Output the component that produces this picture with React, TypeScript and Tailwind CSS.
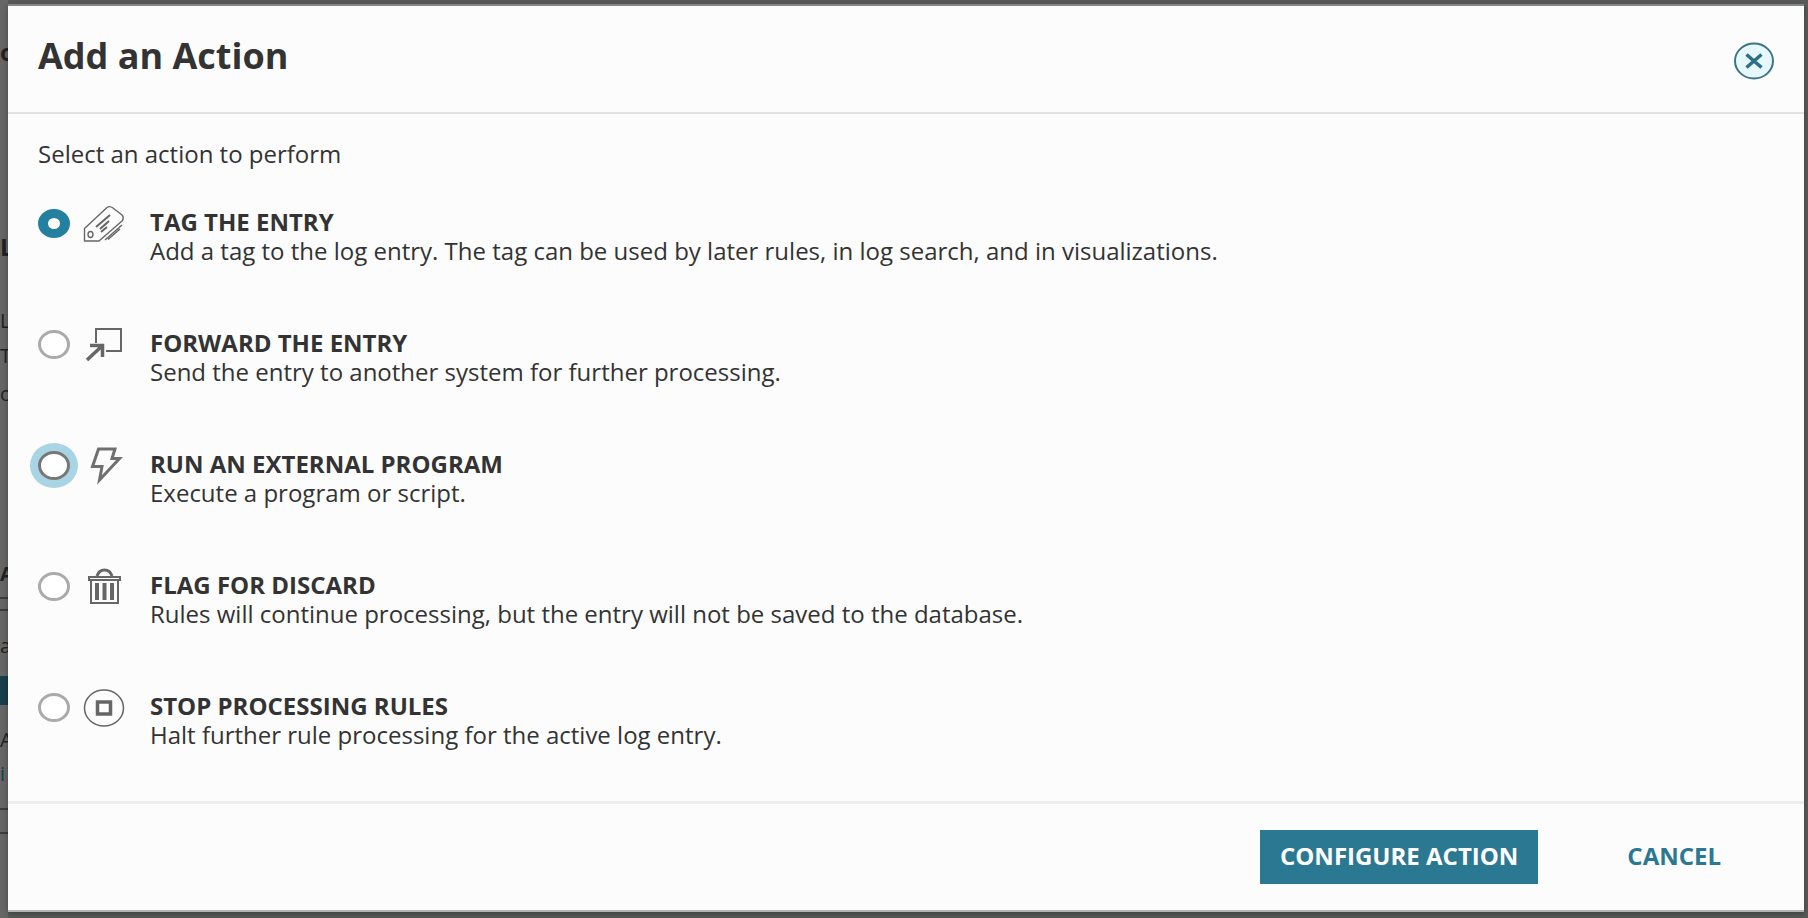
import React, { useState } from "react";

type Action = {
  id: string;
  title: string;
  description: string;
  icon: React.ReactNode;
};

const ACTIONS: Action[] = [
  {
    id: "tag",
    title: "TAG THE ENTRY",
    description:
      "Add a tag to the log entry. The tag can be used by later rules, in log search, and in visualizations.",
    icon: <TagIcon />,
  },
  {
    id: "forward",
    title: "FORWARD THE ENTRY",
    description: "Send the entry to another system for further processing.",
    icon: <ForwardIcon />,
  },
  {
    id: "run",
    title: "RUN AN EXTERNAL PROGRAM",
    description: "Execute a program or script.",
    icon: <BoltIcon />,
  },
  {
    id: "discard",
    title: "FLAG FOR DISCARD",
    description: "Rules will continue processing, but the entry will not be saved to the database.",
    icon: <TrashIcon />,
  },
  {
    id: "stop",
    title: "STOP PROCESSING RULES",
    description: "Halt further rule processing for the active log entry.",
    icon: <StopIcon />,
  },
];

export default function App() {
  const [selected, setSelected] = useState("tag");

  return (
    <div className="relative min-h-screen bg-[#585b5a] font-['Open_Sans','Noto_Sans',sans-serif] text-[#333]">
      <PageEdge />

      <div className="relative flex min-h-screen pt-1 pr-1 pb-[6px] pl-2">
        <form
          role="dialog"
          aria-modal="true"
          aria-labelledby="dialog-title"
          onSubmit={(e) => e.preventDefault()}
          className="flex grow flex-col border-t-2 border-b-2 border-t-[#858585] border-b-[#b5b5b5] bg-[#fcfcfc] shadow-[0_2px_6px_rgba(0,0,0,0.3)]"
        >
          <header className="flex h-[108px] items-start justify-between border-b-2 border-[#e2e2e2] pt-[30px] pr-[29px] pl-[30px]">
            <h1 id="dialog-title" className="text-[36px] leading-10 font-bold">
              Add an Action
            </h1>
            <button type="button" aria-label="Close" className="pt-[6px]">
              <CloseIcon />
            </button>
          </header>

          <fieldset aria-labelledby="action-prompt" className="grow px-[30px] pt-[25px]">
            <p id="action-prompt" className="text-2xl leading-[30px]">
              Select an action to perform
            </p>

            <div className="mt-[38px] flex flex-col gap-[63px]">
              {ACTIONS.map((action) => (
                <ActionRow
                  key={action.id}
                  action={action}
                  checked={selected === action.id}
                  highlighted={action.id === "run"}
                  onSelect={() => setSelected(action.id)}
                />
              ))}
            </div>
          </fieldset>

          <footer className="flex items-center justify-end gap-[73px] border-t-[3px] border-[#ededed] py-[26px] pr-[67px]">
            <button
              type="submit"
              className="h-[54px] bg-[#2a7891] px-5 pb-[3px] text-2xl leading-[30px] font-bold text-white"
            >
              CONFIGURE ACTION
            </button>
            <button type="button" className="h-[54px] px-4 pb-[3px] text-2xl leading-[30px] font-bold text-[#2a7891]">
              CANCEL
            </button>
          </footer>
        </form>
      </div>
    </div>
  );
}

type ActionRowProps = {
  action: Action;
  checked: boolean;
  highlighted: boolean;
  onSelect: () => void;
};

function ActionRow({ action, checked, highlighted, onSelect }: ActionRowProps) {
  return (
    <label className="flex items-start">
      <input
        type="radio"
        name="action"
        value={action.id}
        checked={checked}
        onChange={onSelect}
        className={`mt-[2px] h-[29px] w-8 shrink-0 appearance-none rounded-[50%] bg-white checked:border-x-[10px] checked:border-y-[9px] checked:border-[#23819f] ${
          highlighted ? "border-[3px] border-[#777] ring-[8px] ring-[#a8d4e4]" : "border-[3px] border-[#aaa]"
        }`}
      />
      <span className="-mt-[2px] ml-[13px] w-[67px] shrink-0">{action.icon}</span>
      <span className="text-2xl">
        <span className="block leading-[29px] font-bold">{action.title}</span>
        <span className="block leading-[29px]">{action.description}</span>
      </span>
    </label>
  );
}

// Sliver of the dimmed page that stays visible left of the dialog
function PageEdge() {
  return (
    <div
      aria-hidden="true"
      className="absolute inset-y-0 left-0 flex w-2 flex-col overflow-hidden bg-[#666] text-xl leading-6 text-[#222]"
    >
      <span className="mt-9 text-2xl font-bold">o</span>
      <span className="mt-[163px] text-2xl font-bold">L</span>
      <span className="mt-[46px]">L</span>
      <span className="mt-[11px]">T</span>
      <span className="mt-[14px]">o</span>
      <span className="mt-[156px] font-bold">A</span>
      <span className="mt-[11px] h-[14px] border-y-2 border-[#3c3c3c]" />
      <span className="mt-[23px]">a</span>
      <span className="mt-[18px] h-[29px] bg-[#173f4c]" />
      <span className="mt-[23px]">A</span>
      <span className="mt-[10px] text-[#173f4c]">i</span>
      <span className="mt-[22px] h-[26px] border-y-2 border-[#3c3c3c]" />
    </div>
  );
}

function CloseIcon() {
  return (
    <svg width="42" height="38" viewBox="0 0 42 38" fill="none">
      <ellipse cx="21" cy="19" rx="19" ry="17.5" fill="#e6f8fb" stroke="#3d7585" strokeWidth="2" />
      <path d="M13.5 12.5l15 13M28.5 12.5l-15 13" stroke="#2a6f85" strokeWidth="3.5" />
    </svg>
  );
}

function TagIcon() {
  return (
    <svg width="42" height="38" viewBox="0 0 42 38" fill="none" stroke="#666" strokeWidth="1.4" strokeLinejoin="round">
      <path d="M1.5 36V23.5L24 2.5Q27 .5 30 3L39 10Q41.5 13 39 16L16 36Z" />
      <ellipse cx="7.5" cy="29.5" rx="2.5" ry="3" />
      <path d="M13 22L27 10M17 24L26 16M18 27L24 22" strokeWidth="2" />
      <path d="M22 35L39 20M25 34.5L37 24" />
    </svg>
  );
}

function ForwardIcon() {
  return (
    <svg width="42" height="38" viewBox="0 0 42 38" fill="none" stroke="#666">
      <path d="M13 17V3H38V25H23" strokeWidth="2" />
      <path d="M4 34L19 20M7 19.5H19.5V31" strokeWidth="3.5" />
    </svg>
  );
}

function BoltIcon() {
  return (
    <svg width="42" height="38" viewBox="0 0 42 38" fill="none" stroke="#707070" strokeWidth="3">
      <path d="M15.500 2H32L29 11.5H36.5L16.5 33L19 19.5H9.5Z" />
    </svg>
  );
}

function TrashIcon() {
  return (
    <svg width="42" height="38" viewBox="0 0 42 38" fill="none" stroke="#666">
      <path d="M14 8Q16 2 21.5 2T29 8" strokeWidth="3" />
      <path d="M6 9H37V12H6Z" strokeWidth="2" />
      <path d="M8 12V35H35V12" strokeWidth="2" />
      <path d="M14 15V32M21.5 15V32M29 15V32" strokeWidth="4" />
    </svg>
  );
}

function StopIcon() {
  return (
    <svg width="42" height="38" viewBox="0 0 42 38" fill="none" stroke="#666">
      <ellipse cx="21" cy="19" rx="19.5" ry="18" strokeWidth="1.5" />
      <rect x="14.5" y="13" width="13" height="12" strokeWidth="3.5" />
    </svg>
  );
}
